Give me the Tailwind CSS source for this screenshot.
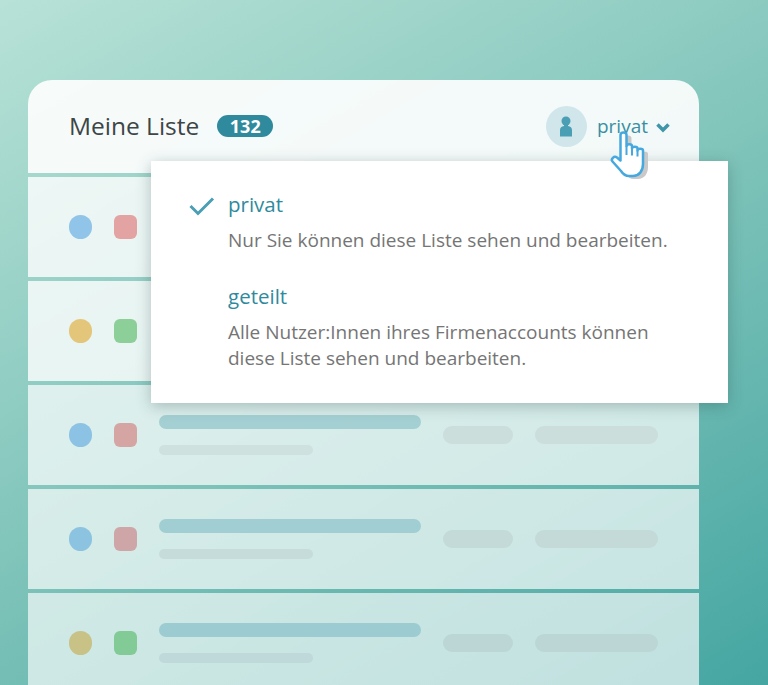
<!DOCTYPE html>
<html lang="de">
<head>
  <meta charset="UTF-8">
  <title>Meine Liste</title>
  <script src="https://cdn.jsdelivr.net/npm/@tailwindcss/browser@4"></script>
</head>
<body class="w-[768px] h-[685px] overflow-hidden bg-[linear-gradient(150deg,#b8e2d7_0%,#80c4ba_50%,#45a6a2_100%)] font-['Open_Sans','Noto_Sans',sans-serif]">
  <div class="pt-[80px] pl-[28px]">
    <div class="relative w-[671px] flex flex-col gap-[4px]">
      <!-- Header -->
      <div class="h-[93px] pl-[41px] pr-[29px] rounded-t-[24px] bg-white/90 flex items-center justify-between">
        <div class="flex items-center gap-[18px] -mt-[1px]">
          <h1 class="text-[24.5px] leading-none text-[#3d4547]">Meine Liste</h1>
          <span class="h-[22px] w-[56px] rounded-full bg-[#2f8a9e] text-white text-[18px] font-bold leading-[22px] text-center">132</span>
        </div>
        <div class="flex items-center -mt-[1px]">
          <div class="w-[41px] h-[41px] rounded-full bg-[#d0e6ea] flex items-center justify-center">
            <svg width="12" height="21" viewBox="0 0 12 21" class="fill-[#4a9fb5]"><circle cx="6" cy="5" r="4.5"/><path d="M4 8h4v2c2.500.5 4 1.500 4 4v6.500H0V14c0-2.500 1.500-3.500 4-4z"/></svg>
          </div>
          <span class="ml-[10px] text-[19px] leading-none text-[#3a8ea3]">privat</span>
          <svg width="14" height="10" viewBox="0 0 14 10" class="ml-[8px] mt-[3px]"><path d="M1.500 1.500l5.500 5.500 5.500-5.500" fill="none" stroke="#3f95a9" stroke-width="3.500"/></svg>
        </div>
      </div>

      <!-- Rows -->
      <div class="h-[100px] pl-[40.500px] bg-white/80 flex items-center gap-[21.750px]">
        <div class="w-[23.500px] h-[23.500px] rounded-full bg-[#90c4e8]"></div>
        <div class="w-[23.500px] h-[23.500px] rounded-[6px] bg-[#e4a3a3]"></div>
      </div>
      <div class="h-[100px] pl-[40.500px] bg-white/80 flex items-center gap-[21.750px]">
        <div class="w-[23.500px] h-[23.500px] rounded-full bg-[#e4c67b]"></div>
        <div class="w-[23.500px] h-[23.500px] rounded-[6px] bg-[#8ccf98]"></div>
      </div>
      <div class="h-[100px] pl-[40.500px] bg-white/70 flex items-center gap-[21.750px]">
        <div class="w-[23.500px] h-[23.500px] rounded-full bg-[#8cc3e4]"></div>
        <div class="w-[23.500px] h-[23.500px] rounded-[6px] bg-[#d4a5a3]"></div>
        <div class="flex flex-col gap-[16px]">
          <div class="w-[262px] h-[14px] rounded-full bg-[#a5d0d3]"></div>
          <div class="w-[154px] h-[10px] rounded-full bg-[#cfe1df]"></div>
        </div>
        <div class="w-[70px] h-[18px] rounded-full bg-[#cbdedc]"></div>
        <div class="w-[123px] h-[18px] rounded-full bg-[#cbdedc]"></div>
      </div>
      <div class="h-[100px] pl-[40.500px] bg-white/[.68] flex items-center gap-[21.750px]">
        <div class="w-[23.500px] h-[23.500px] rounded-full bg-[#8cc3e0]"></div>
        <div class="w-[23.500px] h-[23.500px] rounded-[6px] bg-[#cfa6a8]"></div>
        <div class="flex flex-col gap-[16px]">
          <div class="w-[262px] h-[14px] rounded-full bg-[#a1ced2]"></div>
          <div class="w-[154px] h-[10px] rounded-full bg-[#c6dcdb]"></div>
        </div>
        <div class="w-[70px] h-[18px] rounded-full bg-[#c3dad9]"></div>
        <div class="w-[123px] h-[18px] rounded-full bg-[#c3dad9]"></div>
      </div>
      <div class="h-[100px] pl-[40.500px] bg-white/[.65] flex items-center gap-[21.750px]">
        <div class="w-[23.500px] h-[23.500px] rounded-full bg-[#c8c287]"></div>
        <div class="w-[23.500px] h-[23.500px] rounded-[6px] bg-[#82ca96]"></div>
        <div class="flex flex-col gap-[16px]">
          <div class="w-[262px] h-[14px] rounded-full bg-[#9ccbd1]"></div>
          <div class="w-[154px] h-[10px] rounded-full bg-[#bfd8d9]"></div>
        </div>
        <div class="w-[70px] h-[18px] rounded-full bg-[#bcd6d6]"></div>
        <div class="w-[123px] h-[18px] rounded-full bg-[#bcd6d6]"></div>
      </div>

      <!-- Dropdown -->
      <div class="absolute left-[123px] top-[81px] w-[577px] h-[242px] bg-white shadow-[0_3px_14px_rgba(40,70,70,0.3)] pl-[77px] pt-[29px]">
        <svg width="28" height="22" viewBox="0 0 28 22" class="absolute left-[37px] top-[34px]"><path d="M2.500 11l7.500 7.500L25 3.500" fill="none" stroke="#4a9fb5" stroke-width="3"/></svg>
        <p class="text-[20.500px] leading-[28px] text-[#2f8a9e]">privat</p>
        <p class="mt-[9px] text-[19px] leading-[26px] text-[#757575]">Nur Sie können diese Liste sehen und bearbeiten.</p>
        <p class="mt-[29px] text-[20.500px] leading-[28px] text-[#2f8a9e]">geteilt</p>
        <p class="mt-[9px] text-[19px] leading-[26px] text-[#757575]">Alle Nutzer:Innen ihres Firmenaccounts können<br>diese Liste sehen und bearbeiten.</p>
      </div>

      <!-- Hand cursor -->
      <svg width="50" height="56" viewBox="0 0 50 56" class="absolute left-[578px] top-[48px]">
        <path transform="translate(5 3)" d="M14.500 7c0-3.500 6-3.500 6 0V18c0-2.500 5.500-2.500 5.500 0v2.500c0-2.500 5.500-2.500 5.500 0v2c0-2.500 5.500-2.500 5.500 0V36c0 7-4 12-10 12h-4c-4 0-6-2-8-5L6.500 33.500c-2-2.500 1.500-6 4.500-4l3.500 3z" fill="#c9c9c9"/>
        <path d="M14.500 7c0-3.500 6-3.500 6 0V18c0-2.500 5.500-2.500 5.500 0v2.500c0-2.500 5.500-2.500 5.500 0v2c0-2.500 5.500-2.500 5.500 0V36c0 7-4 12-10 12h-4c-4 0-6-2-8-5L6.500 33.500c-2-2.500 1.500-6 4.500-4l3.500 3z" fill="#fff" stroke="#45a8df" stroke-width="2.500" stroke-linejoin="round"/>
        <path d="M20.500 18v9M26 20.500v7M31.500 22.500v6" fill="none" stroke="#45a8df" stroke-width="2"/>
      </svg>
    </div>
  </div>
</body>
</html>
